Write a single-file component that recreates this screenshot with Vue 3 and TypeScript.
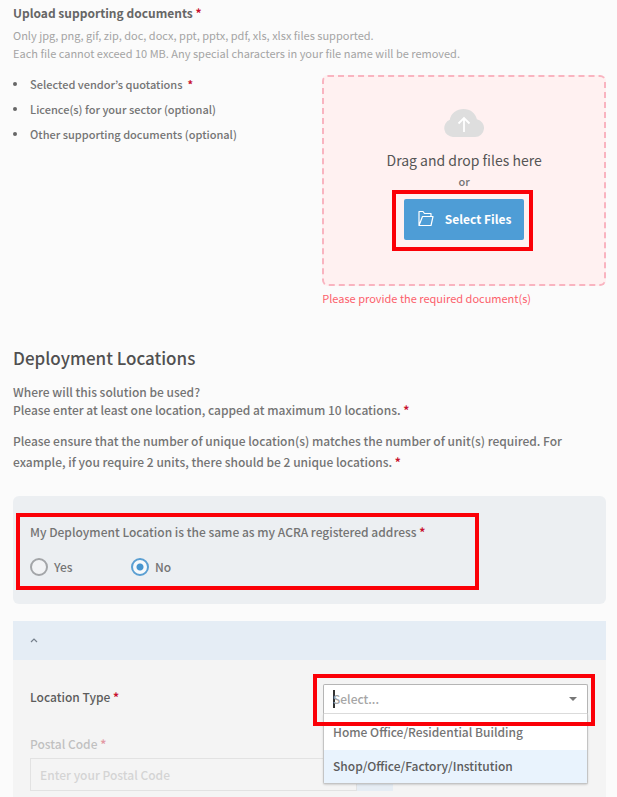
<script setup lang="ts">
import { ref } from 'vue'

interface SupportingDocument {
  label: string
  required: boolean
}

const documents: SupportingDocument[] = [
  { label: 'Selected vendor’s quotations', required: true },
  { label: 'Licence(s) for your sector (optional)', required: false },
  { label: 'Other supporting documents (optional)', required: false },
]

const locationTypes: string[] = [
  'Home Office/Residential Building',
  'Shop/Office/Factory/Institution',
]

const sameAddress = ref<'yes' | 'no'>('no')
const locationType = ref('')
const activeIndex = ref(1)
const postalCode = ref('')
</script>

<template>
  <main class="page">
    <section class="upload">
      <h2 class="upload-title">Upload supporting documents <span class="req">*</span></h2>
      <p class="hint">
        Only jpg, png, gif, zip, doc, docx, ppt, pptx, pdf, xls, xlsx files supported.<br />
        Each file cannot exceed 10 MB. Any special characters in your file name will be removed.
      </p>
      <div class="upload-grid">
        <ul class="doc-list">
          <li v-for="doc in documents" :key="doc.label">
            {{ doc.label }} <span v-if="doc.required" class="req spaced">*</span>
          </li>
        </ul>
        <div>
          <div class="dropzone">
            <svg class="cloud" viewBox="0 0 40 28" aria-hidden="true">
              <path d="M9 28a9 9 0 0 1-3.200-17.300C6.900 4.400 12.600 0 19.600 0c6.600 0 11.700 4 13.300 10.200A9 9 0 0 1 31 28z" fill="#dedede" />
              <path d="M20 23V9.500M14.500 14.500 20 9l5.500 5.500" fill="none" stroke="#fff" stroke-width="1.800" />
            </svg>
            <span class="drag">Drag and drop files here</span>
            <span class="or">or</span>
            <div class="marked marked-button">
              <button type="button" class="select-files">
                <svg class="folder" viewBox="0 0 16 17" aria-hidden="true">
                  <path d="M1 15.500V1.500h4l1.500 2h6.500v3M1 15.500 4.500 6.500h10.500l-2 9z" fill="none" stroke="#fff" stroke-width="1.200" stroke-linejoin="round" />
                </svg>
                Select Files
              </button>
            </div>
          </div>
          <p class="error">Please provide the required document(s)</p>
        </div>
      </div>
    </section>

    <section class="deployment">
      <h1 class="heading">Deployment Locations</h1>
      <p class="intro">
        Where will this solution be used?<br />
        Please enter at least one location, capped at maximum 10 locations. <span class="req">*</span>
      </p>
      <p class="note">
        Please ensure that the number of unique location(s) matches the number of unit(s) required. For
        example, if you require 2 units, there should be 2 unique locations. <span class="req">*</span>
      </p>

      <fieldset class="same-address">
        <legend class="question">
          My Deployment Location is the same as my ACRA registered address <span class="req">*</span>
        </legend>
        <div class="radios">
          <label class="radio"><input v-model="sameAddress" type="radio" name="same" value="yes" />Yes</label>
          <label class="radio"><input v-model="sameAddress" type="radio" name="same" value="no" />No</label>
        </div>
      </fieldset>
    </section>

    <section class="location">
      <button type="button" class="location-head" aria-expanded="true" aria-label="Collapse location">
        <svg class="chevron" viewBox="0 0 8 5" aria-hidden="true">
          <path d="M1 4 4 1l3 3" fill="none" stroke="#76808c" stroke-width="1.200" />
        </svg>
      </button>
      <div class="location-body">
        <div class="type-row">
          <label for="location-type">Location Type <span class="req">*</span></label>
          <div class="combo">
            <div class="marked marked-combo">
              <div class="combo-control">
                <span class="caret"></span>
                <input
                  id="location-type"
                  v-model="locationType"
                  type="text"
                  role="combobox"
                  aria-expanded="true"
                  aria-controls="location-options"
                  autocomplete="off"
                  placeholder="Select..."
                />
                <svg class="arrow" viewBox="0 0 8 4" aria-hidden="true"><path d="M0 0h8L4 4z" fill="#777" /></svg>
              </div>
            </div>
            <ul id="location-options" class="options" role="listbox">
              <li
                v-for="(option, index) in locationTypes"
                :key="option"
                role="option"
                :aria-selected="index === activeIndex"
                :class="{ active: index === activeIndex }"
                @mouseenter="activeIndex = index"
                @click="locationType = option"
              >
                {{ option }}
              </li>
            </ul>
          </div>
        </div>
        <div class="postal">
          <label for="postal-code">Postal Code <span class="req">*</span></label>
          <div class="postal-group">
            <input id="postal-code" v-model="postalCode" type="text" placeholder="Enter your Postal Code" disabled />
            <span class="addon"></span>
          </div>
        </div>
      </div>
    </section>
  </main>
</template>

<style>
body {
  background: #fbfbfb;
}
</style>

<style scoped>
* {
  box-sizing: border-box;
}

.page {
  display: flex;
  flex-direction: column;
  min-height: 100vh;
  padding: 4px 11px 0 13px;
  font-family: "Noto Sans CJK KR", "Noto Sans", sans-serif;
  font-size: 12px;
  font-weight: 500;
  line-height: 18px;
  color: #747474;
}

h1,
h2,
p,
ul {
  margin: 0;
  padding: 0;
}

input,
button {
  font: inherit;
}

.req {
  color: #c8102e;
  font-weight: 700;
}

.spaced {
  margin-left: 2px;
}

.upload-title {
  font-size: 12px;
  font-weight: 700;
  color: #666;
}

.hint {
  margin-top: 4px;
  font-size: 11px;
  font-weight: 400;
  color: #a4a4a4;
}

.upload-grid {
  display: grid;
  grid-template-columns: 109fr 100fr;
  margin-top: 13px;
}

.doc-list {
  display: flex;
  flex-direction: column;
  gap: 7px;
  font-size: 11px;
  list-style: none;
}

.doc-list li {
  display: flex;
  align-items: center;
  gap: 3px;
}

.doc-list li::before {
  content: "";
  width: 4px;
  height: 4px;
  margin-right: 10px;
  background: #666;
  border-radius: 50%;
}

.dropzone {
  display: flex;
  flex-direction: column;
  align-items: center;
  min-height: 211px;
  padding: 32px 0 44px;
  background: #fff1f1;
  border: 2px dashed #f9b4c0;
  border-radius: 6px;
}

.cloud {
  width: 40px;
  height: 28px;
}

.drag {
  margin-top: 13px;
  font-size: 14px;
  font-weight: 400;
  line-height: 20px;
  color: #555;
}

.or {
  margin-top: 2px;
  font-size: 11px;
}

.marked {
  position: relative;
}

.marked::after {
  content: "";
  position: absolute;
  z-index: 5;
  border: 4px solid #fb0007;
  pointer-events: none;
}

.marked-button {
  margin-top: 9px;
}

.marked-button::after {
  inset: -9px -9px -11px -12px;
}

.select-files {
  display: flex;
  align-items: center;
  gap: 11px;
  height: 41px;
  padding: 0 13px 2px 14px;
  background: #4e9dd6;
  border: 0;
  border-radius: 2px;
  color: #fff;
  font-weight: 700;
}

.folder {
  width: 16px;
  height: 17px;
}

.error {
  margin-top: 3px;
  font-size: 11px;
  font-weight: 400;
  color: #fb5f6b;
}

.heading {
  margin-top: 39px;
  font-size: 17px;
  font-weight: 500;
  line-height: 24px;
  color: #505050;
}

.intro {
  margin-top: 13px;
}

.note {
  margin-top: 11px;
  padding-right: 24px;
  line-height: 21px;
}

.same-address {
  min-width: 0;
  margin: 24px 0 0;
  padding: 27px 17px 28px;
  background: #eceff2;
  border: 0;
  border-radius: 6px;
  position: relative;
}

.same-address::after {
  content: "";
  position: absolute;
  inset: 17px 127px 14px 3px;
  border: 4px solid #fb0007;
  pointer-events: none;
}

.question {
  float: left;
  width: 100%;
  padding: 0;
}

.radios {
  clear: both;
  display: flex;
  padding-top: 17px;
}

.radio {
  display: flex;
  align-items: center;
  gap: 6px;
  width: 101px;
}

.radio input {
  appearance: none;
  width: 18px;
  height: 18px;
  margin: 0;
  background: #f2f3f5;
  border: 2px solid #a3a5a8;
  border-radius: 50%;
}

.radio input:checked {
  border-color: #5b9fd2;
  background: radial-gradient(circle, #4795cf 3px, #f7f9fb 4px);
}

.location {
  display: flex;
  flex-direction: column;
  flex: 1;
  margin-top: 17px;
}

.location-head {
  display: flex;
  align-items: center;
  height: 39px;
  padding: 0 17px;
  background: #e5edf5;
  border: 0;
}

.chevron {
  width: 8px;
  height: 5px;
}

.location-body {
  flex: 1;
  padding: 24px 18px 6px 17px;
  background: #f4f4f4;
}

.type-row {
  display: flex;
  justify-content: space-between;
  align-items: flex-start;
}

.type-row label {
  padding-top: 4px;
  color: #5c5c5c;
}

.combo {
  position: relative;
  width: 265px;
}

.marked-combo::after {
  inset: -10px -7px -12px -10px;
}

.combo-control {
  display: flex;
  align-items: center;
  height: 30px;
  padding: 0 10px 0 9px;
  background: #fff;
  border: 1px solid #b5b5b5;
  border-bottom-color: #ddd;
  border-radius: 2px 2px 0 0;
}

.caret {
  width: 2px;
  height: 18px;
  margin-right: -2px;
  background: #333;
}

.combo-control input {
  flex: 1;
  min-width: 0;
  padding: 0;
  background: transparent;
  border: 0;
  outline: 0;
  color: #626262;
}

.combo-control input::placeholder {
  color: #a6a6a6;
}

.arrow {
  width: 8px;
  height: 4px;
}

.options {
  position: absolute;
  z-index: 2;
  top: 30px;
  left: 0;
  right: 0;
  list-style: none;
  background: #fff;
  border: 1px solid #c4c4c4;
  border-top: 0;
  border-radius: 0 0 2px 2px;
  box-shadow: 0 1px 2px rgba(0, 0, 0, 0.15);
}

.options li {
  height: 33px;
  padding: 7px 9px;
}

.options li:first-child {
  height: 36px;
  padding-top: 9px;
}

.options .active {
  background: #e9f3fd;
  color: #5c5c5c;
}

.postal {
  margin-top: 21px;
}

.postal label {
  display: block;
  opacity: 0.4;
}

.postal-group {
  display: flex;
  width: 65%;
  margin-top: 5px;
}

.postal-group input {
  flex: 1;
  min-width: 0;
  height: 33px;
  padding: 0 9px;
  background: #f4f4f4;
  border: 1px solid #e2e2e2;
}

.postal-group input::placeholder {
  color: #d4d4d4;
}

.addon {
  width: 36px;
  background: #e6edf4;
}
</style>
